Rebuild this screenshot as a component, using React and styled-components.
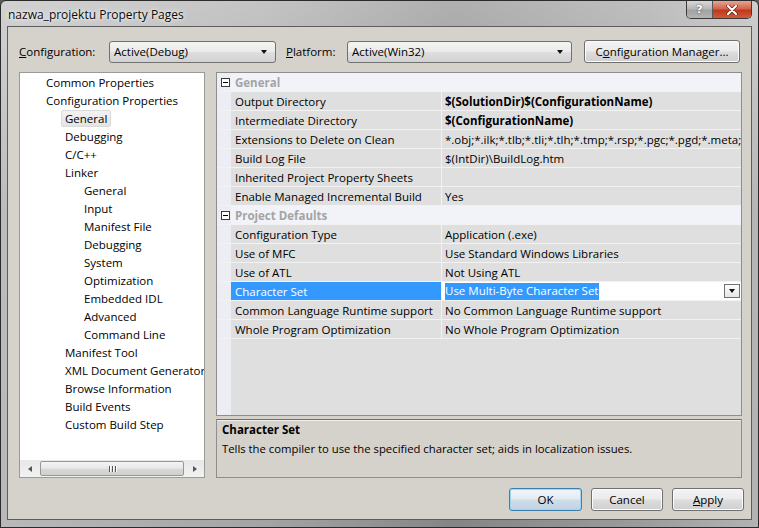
import React from "react";
import styled, { createGlobalStyle } from "styled-components";

const GlobalStyle = createGlobalStyle`
  html, body {
    margin: 0;
    padding: 0;
    background: #5a5a5a;
  }
  body {
    font-family: "Open Sans", "Noto Sans", sans-serif;
    font-size: 11px;
    color: #000;
  }
  * { box-sizing: border-box; }
`;

const Window = styled.div`
  width: 759px;
  height: 528px;
  display: flex;
  flex-direction: column;
  border: 1px solid #2b2b2b;
  border-radius: 6px 6px 0 0;
  padding: 0 6px 7px 6px;
  background:
    linear-gradient(180deg, rgba(255,255,255,0.35) 0%, rgba(255,255,255,0.05) 40%, rgba(0,0,0,0) 100%),
    linear-gradient(90deg, #b9b9b9 0%, #a4a4a4 35%, #858585 60%, #9c9c9c 85%, #b3b3b3 100%);
`;

const TitleBar = styled.div`
  height: 25px;
  display: flex;
  align-items: flex-start;
  padding-left: 1px;
`;

const Title = styled.div`
  align-self: center;
  font-size: 12px;
  color: #0a0a0a;
  text-shadow: 0 0 6px rgba(255,255,255,0.9), 0 0 3px rgba(255,255,255,0.9);
  margin-top: 2px;
`;

const Controls = styled.div`
  margin-left: auto;
  display: flex;
  border: 1px solid #3a3a3a;
  border-top: none;
  border-radius: 0 0 5px 5px;
  overflow: hidden;
  height: 18px;
`;

const CtrlButton = styled.div`
  width: ${(p) => p.width}px;
  height: 100%;
  display: flex;
  align-items: center;
  justify-content: center;
  font-family: "DejaVu Sans", sans-serif;
  font-weight: bold;
  font-size: 11px;
  color: #fff;
  background: ${(p) =>
    p.danger
      ? "linear-gradient(180deg, #e8a493 0%, #d0664e 45%, #c0391c 55%, #d25a38 100%)"
      : "linear-gradient(180deg, #d8d8d8 0%, #b8b8b8 45%, #a2a2a2 55%, #b4b4b4 100%)"};
  border-left: ${(p) => (p.danger ? "1px solid #5a5a5a" : "none")};
  text-shadow: 0 0 2px #333;
`;

const Client = styled.div`
  flex: 1;
  display: flex;
  flex-direction: column;
  background: #d5d2cb;
  border: 1px solid #5d5d5d;
  padding: 13px 9px 6px 11px;
`;

const Toolbar = styled.div`
  display: flex;
  align-items: center;
  height: 23px;
`;

const Label = styled.span`
  width: ${(p) => p.width}px;
  font-size: 11.5px;
  u { text-decoration: underline; }
`;

const Combo = styled.div`
  width: ${(p) => p.width}px;
  height: 22px;
  display: flex;
  align-items: center;
  padding: 0 8px 0 4px;
  border: 1px solid #707070;
  border-radius: 3px;
  background: linear-gradient(180deg, #f3f3f3 0%, #ebebeb 48%, #dedede 52%, #d2d2d2 100%);
  font-size: 11.5px;
  margin-right: ${(p) => p.gap || 0}px;
  span { flex: 1; }
`;

const Arrow = styled.i`
  width: 0;
  height: 0;
  border-left: 3.5px solid transparent;
  border-right: 3.5px solid transparent;
  border-top: 4px solid #111;
`;

const Button = styled.div`
  width: ${(p) => p.width}px;
  height: ${(p) => p.height || 23}px;
  display: flex;
  align-items: center;
  justify-content: center;
  border: 1px solid ${(p) => (p.primary ? "#3c7fb1" : "#707070")};
  border-radius: 3px;
  background: ${(p) =>
    p.primary
      ? "linear-gradient(180deg, #f2f6fa 0%, #e2ebf3 48%, #cfdde9 52%, #c1d3e3 100%)"
      : "linear-gradient(180deg, #f3f3f3 0%, #ebebeb 48%, #dddddd 52%, #cfcfcf 100%)"};
  box-shadow: ${(p) => (p.primary ? "inset 0 0 0 1px #9ed4f4" : "inset 0 0 0 1px #fbfbfb")};
  font-size: 11.5px;
  margin-left: ${(p) => p.ml || 0}px;
  u { text-decoration: underline; }
`;

const Main = styled.div`
  margin-top: 9px;
  height: 406px;
  display: flex;
  gap: 11px;
`;

const Tree = styled.div`
  width: 186px;
  display: flex;
  flex-direction: column;
  background: #fff;
  border: 1px solid #9a9a9a;
`;

const TreeList = styled.div`
  flex: 1;
  overflow: hidden;
`;

const TreeItem = styled.div`
  height: 18px;
  display: flex;
  align-items: center;
  padding-left: ${(p) => 25 + p.level * 19}px;
  white-space: nowrap;
  font-size: 11.5px;
`;

const TreeText = styled.span`
  padding: 0 3px;
  margin-left: -3px;
  line-height: 15px;
  border: 1px solid ${(p) => (p.selected ? "#dadada" : "transparent")};
  background: ${(p) => (p.selected ? "linear-gradient(180deg,#f2f2f2,#e4e4e4)" : "transparent")};
  border-radius: 2px;
`;

const HScroll = styled.div`
  height: 17px;
  display: flex;
  align-items: center;
  background: linear-gradient(180deg, #e8e8e8, #f2f2f2);
  padding: 0 1px;
`;

const ScrollArrow = styled.div`
  width: 17px;
  height: 17px;
  display: flex;
  align-items: center;
  justify-content: center;
  i {
    width: 0;
    height: 0;
    border-top: 3.5px solid transparent;
    border-bottom: 3.5px solid transparent;
    ${(p) => (p.left ? "border-right: 4px solid #555;" : "border-left: 4px solid #555;")}
  }
`;

const Thumb = styled.div`
  flex: 1;
  height: 15px;
  margin: 0 2px;
  border: 1px solid #979797;
  border-radius: 2px;
  background: linear-gradient(180deg, #f4f4f4 0%, #e6e6e6 50%, #d8d8d8 51%, #d0d0d0 100%);
  display: flex;
  align-items: center;
  justify-content: center;
  gap: 2px;
  b {
    width: 1px;
    height: 6px;
    background: #555;
    box-shadow: 1px 0 0 #fff;
  }
`;

const RightCol = styled.div`
  flex: 1;
  display: flex;
  flex-direction: column;
  gap: 3px;
  min-width: 0;
`;

const Grid = styled.div`
  height: 344px;
  border: 1px solid #8e8e8e;
  background: linear-gradient(90deg, #eceef3 0px, #eceef3 14px, #dfdfdf 14px);
  overflow: hidden;
`;

const Row = styled.div`
  height: 19px;
  display: grid;
  grid-template-columns: 14px 211px 1fr;
  background: ${(p) => (p.category ? "#f2f3f8" : "#dfdfdf")};
  border-bottom: 1px solid #f2f2f2;
  font-size: 11.5px;
`;

const Margin = styled.div`
  background: #eceef3;
  display: flex;
  align-items: center;
  justify-content: center;
  padding-left: 3px;
`;

const Toggle = styled.span`
  width: 9px;
  height: 9px;
  border: 1px solid #3a3a3a;
  background: #fff;
  position: relative;
  &::after {
    content: "";
    position: absolute;
    left: 1px;
    right: 1px;
    top: 3px;
    height: 1px;
    background: #000;
  }
`;

const CatName = styled.div`
  grid-column: 2 / 4;
  display: flex;
  align-items: center;
  padding-left: 4px;
  font-weight: bold;
  color: #a4a4a4;
`;

const NameCell = styled.div`
  display: flex;
  align-items: center;
  padding-left: 4px;
  white-space: nowrap;
  overflow: hidden;
  border-right: 1px solid #f2f2f2;
  background: ${(p) => (p.selected ? "#3399ff" : "transparent")};
  color: ${(p) => (p.selected ? "#fff" : "#000")};
`;

const ValueCell = styled.div`
  display: flex;
  align-items: center;
  padding-left: 3px;
  white-space: nowrap;
  overflow: hidden;
  font-weight: ${(p) => (p.bold ? "bold" : "normal")};
  background: ${(p) => (p.selected ? "#fff" : "transparent")};
`;

const Highlight = styled.span`
  background: #3399ff;
  color: #fff;
  padding: 0 1px 1px 0;
  line-height: 16px;
`;

const DropBtn = styled.div`
  margin-left: auto;
  margin-right: 1px;
  width: 16px;
  height: 14px;
  border: 1px solid #707070;
  background: linear-gradient(180deg, #fdfdfd, #e6e6e6);
  display: flex;
  align-items: center;
  justify-content: center;
  flex-shrink: 0;
`;

const Desc = styled.div`
  height: 59px;
  border: 1px solid #8e8e8e;
  border-top-color: #6f6f6f;
  box-shadow: inset 0 1px 0 #efefef;
  padding: 0 5px;
  font-size: 11.5px;
  line-height: 19px;
`;

const DescTitle = styled.div`
  font-weight: bold;
`;

const DescText = styled.div`
  font-size: 11.3px;
`;

const Footer = styled.div`
  margin-top: 10px;
  margin-right: -2px;
  display: flex;
  justify-content: flex-end;
`;

const treeItems = [
  ["Common Properties", 1],
  ["Configuration Properties", 1],
  ["General", 2, true],
  ["Debugging", 2],
  ["C/C++", 2],
  ["Linker", 2],
  ["General", 3],
  ["Input", 3],
  ["Manifest File", 3],
  ["Debugging", 3],
  ["System", 3],
  ["Optimization", 3],
  ["Embedded IDL", 3],
  ["Advanced", 3],
  ["Command Line", 3],
  ["Manifest Tool", 2],
  ["XML Document Generator", 2],
  ["Browse Information", 2],
  ["Build Events", 2],
  ["Custom Build Step", 2],
];

const sections = [
  {
    name: "General",
    props: [
      { name: "Output Directory", value: "$(SolutionDir)$(ConfigurationName)", bold: true },
      { name: "Intermediate Directory", value: "$(ConfigurationName)", bold: true },
      {
        name: "Extensions to Delete on Clean",
        value: "*.obj;*.ilk;*.tlb;*.tli;*.tlh;*.tmp;*.rsp;*.pgc;*.pgd;*.meta;$(TargetPath)",
      },
      { name: "Build Log File", value: "$(IntDir)\\BuildLog.htm" },
      { name: "Inherited Project Property Sheets", value: "" },
      { name: "Enable Managed Incremental Build", value: "Yes" },
    ],
  },
  {
    name: "Project Defaults",
    props: [
      { name: "Configuration Type", value: "Application (.exe)" },
      { name: "Use of MFC", value: "Use Standard Windows Libraries" },
      { name: "Use of ATL", value: "Not Using ATL" },
      { name: "Character Set", value: "Use Multi-Byte Character Set", selected: true },
      { name: "Common Language Runtime support", value: "No Common Language Runtime support" },
      { name: "Whole Program Optimization", value: "No Whole Program Optimization" },
    ],
  },
];

const CloseGlyph = () => (
  <svg width="12" height="10" viewBox="0 0 12 10">
    <path d="M2 1 L10 9 M10 1 L2 9" stroke="#5a1a0a" strokeWidth="3.4" strokeLinecap="round" />
    <path d="M2 1 L10 9 M10 1 L2 9" stroke="#fff" strokeWidth="2.2" strokeLinecap="round" />
  </svg>
);

export default function App() {
  return (
    <>
      <GlobalStyle />
      <Window>
        <TitleBar>
          <Title>nazwa_projektu Property Pages</Title>
          <Controls>
            <CtrlButton width={25}>?</CtrlButton>
            <CtrlButton width={39} danger>
              <CloseGlyph />
            </CtrlButton>
          </Controls>
        </TitleBar>
        <Client>
          <Toolbar>
            <Label width={90}>
              <u>C</u>onfiguration:
            </Label>
            <Combo width={167} gap={10}>
              <span>Active(Debug)</span>
              <Arrow />
            </Combo>
            <Label width={61}>
              <u>P</u>latform:
            </Label>
            <Combo width={225}>
              <span>Active(Win32)</span>
              <Arrow />
            </Combo>
            <Button width={156} ml={12}>
              C<u>o</u>nfiguration Manager...
            </Button>
          </Toolbar>
          <Main>
            <Tree>
              <TreeList>
                {treeItems.map(([label, level, selected], i) => (
                  <TreeItem key={i} level={level - 1}>
                    <TreeText selected={selected}>{label}</TreeText>
                  </TreeItem>
                ))}
              </TreeList>
              <HScroll>
                <ScrollArrow left>
                  <i />
                </ScrollArrow>
                <Thumb>
                  <b />
                  <b />
                  <b />
                </Thumb>
                <ScrollArrow>
                  <i />
                </ScrollArrow>
              </HScroll>
            </Tree>
            <RightCol>
              <Grid>
                {sections.map((s) => (
                  <React.Fragment key={s.name}>
                    <Row category>
                      <Margin>
                        <Toggle />
                      </Margin>
                      <CatName>{s.name}</CatName>
                    </Row>
                    {s.props.map((p) => (
                      <Row key={p.name}>
                        <Margin />
                        <NameCell selected={p.selected}>{p.name}</NameCell>
                        <ValueCell bold={p.bold} selected={p.selected}>
                          {p.selected ? (
                            <>
                              <Highlight>{p.value}</Highlight>
                              <DropBtn>
                                <Arrow />
                              </DropBtn>
                            </>
                          ) : (
                            p.value
                          )}
                        </ValueCell>
                      </Row>
                    ))}
                  </React.Fragment>
                ))}
              </Grid>
              <Desc>
                <DescTitle>Character Set</DescTitle>
                <DescText>Tells the compiler to use the specified character set; aids in localization issues.</DescText>
              </Desc>
            </RightCol>
          </Main>
          <Footer>
            <Button width={73} primary>
              OK
            </Button>
            <Button width={72} ml={9}>
              Cancel
            </Button>
            <Button width={72} ml={9}>
              <u>A</u>pply
            </Button>
          </Footer>
        </Client>
      </Window>
    </>
  );
}
